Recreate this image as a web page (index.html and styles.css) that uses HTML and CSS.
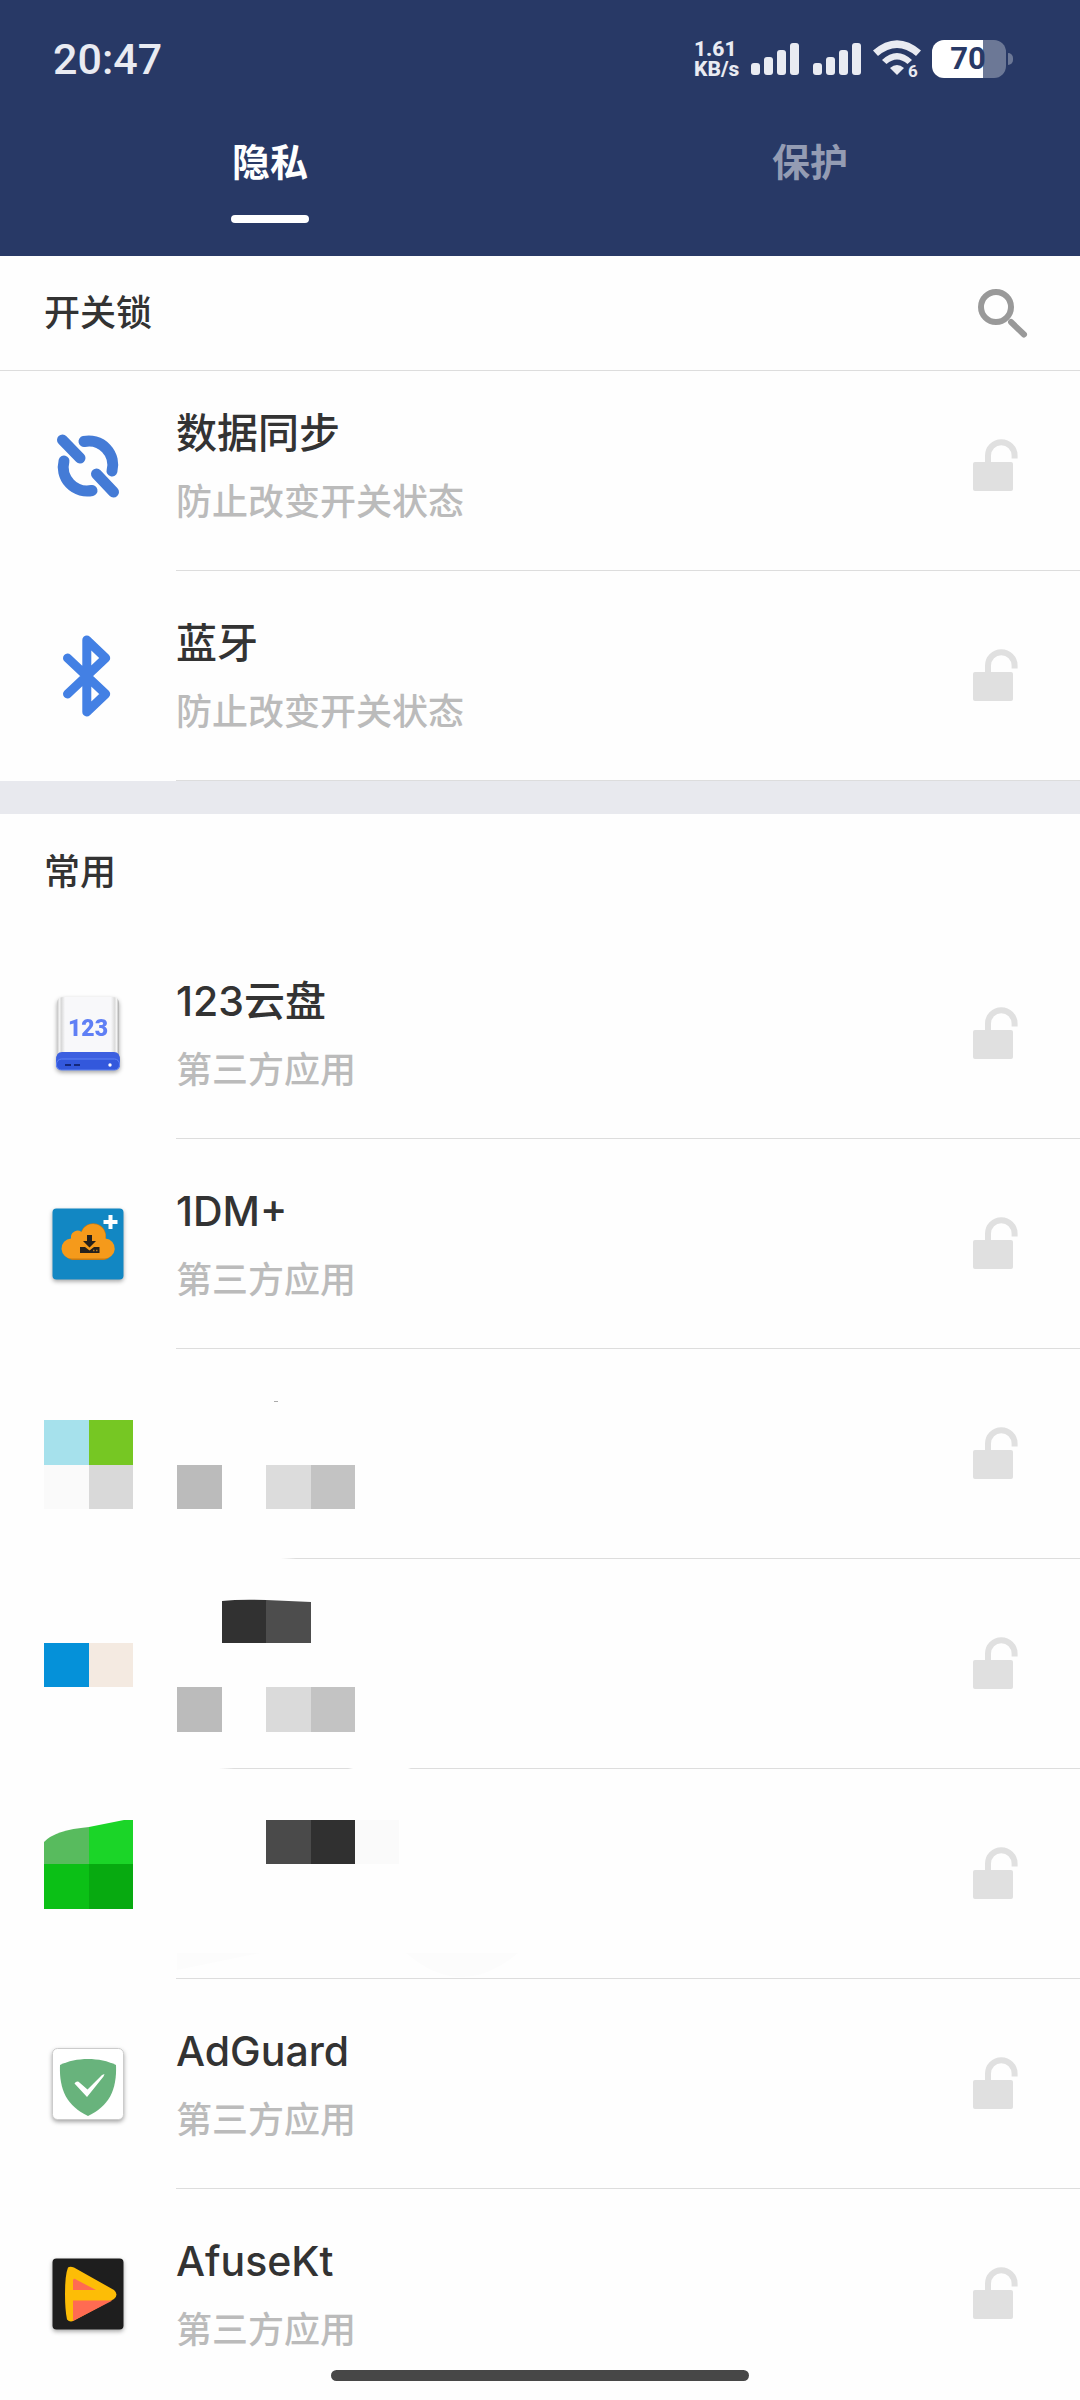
FILE: index.html
```html
<!DOCTYPE html>
<html lang="zh-CN">
<head>
<meta charset="utf-8">
<meta name="viewport" content="width=device-width, initial-scale=1">
<title>隐私</title>
<link rel="stylesheet" href="styles.css">
</head>
<body>
<svg class="defs" aria-hidden="true">
  <symbol id="lock" viewBox="0 0 46 54">
    <rect x="0" y="24" width="40" height="29" rx="2" fill="currentColor"/>
    <path d="M15 25V17.500a13.300 13.300 0 0 1 26.600 0V20.500" fill="none" stroke="currentColor" stroke-width="6"/>
  </symbol>
  <symbol id="signal" viewBox="0 0 48 32">
    <rect x="0" y="20" width="9" height="12" rx="3"/>
    <rect x="13" y="14" width="9" height="18" rx="3"/>
    <rect x="26" y="7" width="9" height="25" rx="3"/>
    <rect x="39" y="0" width="9" height="32" rx="3"/>
  </symbol>
</svg>

<header class="header">
  <div class="status">
    <time class="clock">20:47</time>
    <div class="rate"><span>1.61</span><span>KB/s</span></div>
    <svg class="signal" width="48" height="32" aria-hidden="true"><use href="#signal"/></svg>
    <svg class="signal second" width="48" height="32" aria-hidden="true"><use href="#signal"/></svg>
    <svg class="wifi" width="48" height="38" viewBox="0 0 48 38" aria-hidden="true">
      <path d="M0 10.500Q24 -10 48 10.500L43 16Q24 0 5 16Z"/>
      <path d="M9 20Q24 6 39 20L34.500 24Q24 15 13.500 24Z"/>
      <path d="M17 28Q24 22 31 28L24 35Z"/>
      <text x="35" y="37">6</text>
    </svg>
    <div class="battery"><span class="cell">70</span></div>
  </div>
  <nav class="tabs" role="tablist">
    <button class="tab active" type="button" role="tab" aria-selected="true">隐私</button>
    <button class="tab" type="button" role="tab" aria-selected="false">保护</button>
  </nav>
</header>

<main>
  <section class="group">
    <div class="heading ruled">
      <h2>开关锁</h2>
      <button class="search" type="button" aria-label="搜索">
        <svg width="50" height="50" viewBox="0 0 50 50"><circle cx="18" cy="19" r="15"/><path d="M33 34L46 46.500"/></svg>
      </button>
    </div>
    <ul class="list">
      <li class="row">
        <svg class="icon" viewBox="0 0 88 88" aria-hidden="true">
          <g fill="none" stroke="#447bd6" stroke-width="11" stroke-linecap="round">
            <path d="M18.500 18L36 36M52.500 52L69.500 70"/>
            <path d="M40 19.500A24 24 0 0 1 68 49"/>
            <path d="M20 39A24 24 0 0 0 48 68.500"/>
          </g>
        </svg>
        <div class="body">
          <div class="text"><h3>数据同步</h3><p>防止改变开关状态</p></div>
          <button class="lock" type="button" aria-label="锁定"><svg width="46" height="54"><use href="#lock"/></svg></button>
        </div>
      </li>
      <li class="row">
        <svg class="icon" viewBox="0 0 88 88" aria-hidden="true">
          <path d="M23.500 26L61.700 62L42.800 80V8L61.700 26L23.500 62" fill="none" stroke="#4380e4" stroke-width="9" stroke-linecap="round" stroke-linejoin="round"/>
        </svg>
        <div class="body">
          <div class="text"><h3>蓝牙</h3><p>防止改变开关状态</p></div>
          <button class="lock" type="button" aria-label="锁定"><svg width="46" height="54"><use href="#lock"/></svg></button>
        </div>
      </li>
    </ul>
  </section>

  <section class="group">
    <div class="heading"><h2>常用</h2></div>
    <ul class="list">
      <li class="row">
        <svg class="icon shadow" viewBox="0 0 88 88" aria-hidden="true">
          <defs>
            <linearGradient id="case"><stop offset="0" stop-color="#c4c4c4"/><stop offset=".04" stop-color="#f2f2f2"/><stop offset=".07" stop-color="#d8d8d8"/><stop offset=".13" stop-color="#f8f8fa"/><stop offset=".87" stop-color="#f8f8fa"/><stop offset=".93" stop-color="#dcdcdc"/><stop offset=".96" stop-color="#f4f4f4"/><stop offset="1" stop-color="#a8a8a8"/></linearGradient>
          </defs>
          <rect x="13" y="7" width="62" height="72" rx="6" fill="url(#case)"/>
          <path d="M12 70Q12 62 18 62H70Q76 62 76 70V74Q76 80 70 80H18Q12 80 12 74Z" fill="#3c5fe0"/>
          <rect x="12.500" y="69" width="63" height="11" rx="5" fill="#3358dc" stroke="#5f83f5"/>
          <path d="M21 75H27M30 75H36" stroke="#14287c" stroke-width="2"/>
          <circle cx="66" cy="75" r="1.700" fill="#fff"/>
          <text class="drive-label" x="44" y="46" text-anchor="middle">123</text>
        </svg>
        <div class="body">
          <div class="text"><h3>123云盘</h3><p>第三方应用</p></div>
          <button class="lock" type="button" aria-label="锁定"><svg width="46" height="54"><use href="#lock"/></svg></button>
        </div>
      </li>
      <li class="row">
        <svg class="icon shadow" viewBox="0 0 88 88" aria-hidden="true">
          <rect x="8.500" y="8.500" width="71" height="71" rx="4" fill="#1287c3"/>
          <path d="M28 60A10.500 10.500 0 0 1 27 39.500V37.500A6.500 6.500 0 0 1 37 32.500A12.500 12.500 0 0 1 61.500 39.500A10.500 10.500 0 0 1 60 60Z" fill="#c77a12"/>
          <path d="M28 58.500A10 10 0 0 1 27 38.500V36.500A6.500 6.500 0 0 1 37.500 32A12.500 12.500 0 0 1 61.500 38.500A10 10 0 0 1 60 58.500Z" fill="#f59a1b"/>
          <path d="M66.500 15V29M59.500 22H73.500" stroke="#fff" stroke-width="4"/>
          <path d="M43 35H48V41H52L45.500 47.500L39 41H43Z" fill="#25211c"/>
          <path d="M36 47H41L45.500 50.500L50 47H55.500V53H36Z" fill="#25211c"/>
          <path d="M49 50.500h1.500M52 50.500h1.500" stroke="#b5761c" stroke-width="1.500"/>
        </svg>
        <div class="body">
          <div class="text"><h3>1DM+</h3><p>第三方应用</p></div>
          <button class="lock" type="button" aria-label="锁定"><svg width="46" height="54"><use href="#lock"/></svg></button>
        </div>
      </li>
      <li class="row">
        <svg class="mosaic-icon" viewBox="0 0 176 210" aria-hidden="true">
          <path d="M44 71H89V116H44Z" fill="#a6e1ec"/><path d="M89 71H133V116H89Z" fill="#76c723"/>
          <path d="M44 116H89V160H44Z" fill="#fafafa"/><path d="M89 116H133V160H89Z" fill="#d9d9d9"/>
        </svg>
        <div class="body cut-start">
          <svg class="mosaic" viewBox="176 0 400 210" aria-hidden="true">
            <path d="M274 52h4v1h-4Z" fill="#aaa"/>
            <path d="M177 116H222V160H177Z" fill="#bbb"/><path d="M266 116H311V160H266Z" fill="#dcdcdc"/><path d="M311 116H355V160H311Z" fill="#c3c3c3"/>
          </svg>
          <button class="lock" type="button" aria-label="锁定"><svg width="46" height="54"><use href="#lock"/></svg></button>
        </div>
      </li>
      <li class="row">
        <svg class="mosaic-icon" viewBox="0 0 176 210" aria-hidden="true">
          <path d="M44 84H89V128H44Z" fill="#0591d9"/><path d="M89 84H133V128H89Z" fill="#f4eae1"/>
        </svg>
        <div class="body cut-middle">
          <svg class="mosaic" viewBox="176 0 400 210" aria-hidden="true">
            <path d="M222 42Q240 40 266 41V84H222Z" fill="#313131"/><path d="M266 41L311 43V84H266Z" fill="#4d4d4d"/>
            <path d="M177 128H222V173H177Z" fill="#bbb"/><path d="M266 128H311V173H266Z" fill="#dadada"/><path d="M311 128H355V173H311Z" fill="#c3c3c3"/>
          </svg>
          <button class="lock" type="button" aria-label="锁定"><svg width="46" height="54"><use href="#lock"/></svg></button>
        </div>
      </li>
      <li class="row">
        <svg class="mosaic-icon" viewBox="0 0 176 210" aria-hidden="true">
          <path d="M44 73Q55 61 89 58V96H44Z" fill="#58bb5e"/><path d="M89 58L124 51H133V96H89Z" fill="#1bd528"/>
          <path d="M44 95H89V140H44Z" fill="#0bc016"/><path d="M89 95H133V140H89Z" fill="#07aa10"/>
        </svg>
        <div class="body">
          <svg class="mosaic" viewBox="176 0 400 210" aria-hidden="true">
            <path d="M266 51H311V95H266Z" fill="#4a4a4a"/><path d="M311 51H355V95H311Z" fill="#303030"/><path d="M355 51H399V95H355Z" fill="#fafafa"/>
            <path d="M177 184H260L177 201ZM406 184H518Q462 232 406 184Z" fill="#fcfcfc"/>
          </svg>
          <button class="lock" type="button" aria-label="锁定"><svg width="46" height="54"><use href="#lock"/></svg></button>
        </div>
      </li>
      <li class="row">
        <svg class="icon shadow" viewBox="0 0 88 88" aria-hidden="true">
          <rect x="8.500" y="8.500" width="71" height="71" rx="5" fill="#fff" stroke="#ccc"/>
          <path d="M44 19C54 19 64 21 72 25C73 50 65 66 44 76C23 66 15 50 16 25C24 21 34 19 44 19Z" fill="#68b37c"/>
          <path d="M30.500 43.500Q33 40 36 43L43.500 49.500L58 35L60.500 34L59.500 36.500L43 57Z" fill="#fff"/>
        </svg>
        <div class="body">
          <div class="text"><h3>AdGuard</h3><p>第三方应用</p></div>
          <button class="lock" type="button" aria-label="锁定"><svg width="46" height="54"><use href="#lock"/></svg></button>
        </div>
      </li>
      <li class="row">
        <svg class="icon shadow" viewBox="0 0 88 88" aria-hidden="true">
          <rect x="8.500" y="8.500" width="71" height="71" rx="4" fill="#1e1e1e"/>
          <path d="M24 17.500Q26 16 30 17.500L70 40Q75 44.500 70 49L30 70.500Q26 73 23 69.500Q21 60 21 44Q21 25 24 17.500Z" fill="#fdbd06"/>
          <path d="M29 30Q30 28 32 29.500L52 40H29Z" fill="#ff6b52"/>
          <path d="M29 50.500H68.500L29 71Z" fill="#ff6b52"/>
        </svg>
        <div class="body plain">
          <div class="text"><h3>AfuseKt</h3><p>第三方应用</p></div>
          <button class="lock" type="button" aria-label="锁定"><svg width="46" height="54"><use href="#lock"/></svg></button>
        </div>
      </li>
    </ul>
  </section>
</main>
<div class="home-bar"></div>
</body>
</html>
```
FILE: styles.css
```css
* { box-sizing: border-box; }

body {
  margin: 0;
  background: #fefefe;
  color: #333;
  font-family: Inter, "Noto Sans CJK SC", sans-serif;
}

h2, h3, p, ul { margin: 0; padding: 0; font-weight: 500; }
ul { list-style: none; }
svg { display: block; flex: none; }
button { border: 0; padding: 0; background: none; font: inherit; color: inherit; cursor: pointer; }
.defs { position: absolute; width: 0; height: 0; }

/* Header */
.header { background: #283966; color: #e9ebf2; }

.status {
  display: flex;
  align-items: center;
  height: 118px;
  padding: 0 67px 0 53px;
}
.clock { flex: 1; font: 500 43px/56px Roboto, sans-serif; }
.rate {
  display: flex;
  flex-direction: column;
  width: 57px;
  font: 800 21px/20px Roboto, sans-serif;
}
.signal { fill: currentColor; }
.second { margin: 0 12px 0 14px; }
.wifi { fill: currentColor; margin-right: 11px; overflow: visible; }
.wifi text { font: 700 17px Roboto, sans-serif; }

.battery { display: flex; align-items: center; gap: 2px; }
.battery::after {
  content: "";
  width: 5px;
  height: 12px;
  border-radius: 0 6px 6px 0;
  background: #6c7896;
}
.cell {
  width: 74px;
  height: 38px;
  padding-right: 2px;
  border-radius: 12px;
  background: linear-gradient(90deg, #fff 51px, #6c7896 51px);
  color: #283966;
  font: 700 31px/38px Roboto, sans-serif;
  text-align: center;
}

.tabs { display: flex; height: 138px; }
.tab {
  flex: 1;
  display: flex;
  flex-direction: column;
  align-items: center;
  gap: 25px;
  padding-top: 16px;
  color: #949cb3;
  font-size: 38px;
  font-weight: 700;
  line-height: 56px;
}
.tab.active { color: #fff; }
.tab.active::after {
  content: "";
  width: 78px;
  height: 8px;
  border-radius: 4px;
  background: #fff;
}

/* Groups */
.group + .group { border-top: 33px solid #e8e9ee; }
.heading {
  display: flex;
  align-items: center;
  justify-content: space-between;
  height: 115px;
  padding: 0 52px 0 44px;
}
.ruled { border-bottom: 1px solid #ddd; }
.heading h2 { font-size: 36px; line-height: 54px; }
.search svg { fill: none; stroke: #999; stroke-width: 6px; stroke-linecap: round; }

/* Rows */
.row { display: flex; align-items: center; height: 210px; }
.ruled + .list { margin-top: -10px; }
.icon { width: 88px; height: 88px; margin: 0 44px; }
.shadow { filter: drop-shadow(0 2px 2px rgba(0, 0, 0, .35)); }
.drive-label { fill: #5f7ff5; font: 900 23px Roboto, sans-serif; }
.mosaic-icon { width: 176px; height: 210px; }
.mosaic { width: 400px; height: 210px; }

.body {
  flex: 1;
  display: flex;
  align-items: center;
  justify-content: space-between;
  height: 210px;
  padding-right: 61px;
  background: linear-gradient(#ddd, #ddd) bottom / 100% 1px no-repeat;
}
.plain { background: none; }
.cut-start { background-image: linear-gradient(90deg, transparent 105px, #ddd 120px); }
.cut-middle {
  background-image: linear-gradient(90deg, transparent 43px, #ddd 58px, #ddd 172px, transparent 177px, transparent 232px, #ddd 235px);
}
.text h3 { font-size: 41px; line-height: 72px; }
.text p { color: #bbb; font-size: 36px; line-height: 66px; }
.lock { padding-bottom: 2px; color: #e0e0e0; }

.home-bar {
  position: fixed;
  bottom: 19px;
  left: 50%;
  width: 418px;
  height: 11px;
  margin-left: -209px;
  border-radius: 6px;
  background: #474747;
}
```
